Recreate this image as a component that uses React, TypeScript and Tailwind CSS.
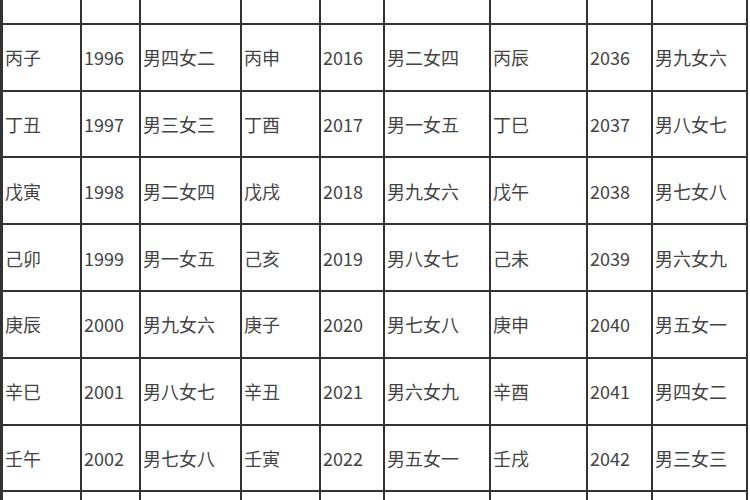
const rows: string[][] = [
  ['乙亥', '1995', '男五女一', '乙未', '2015', '男三女三', '乙卯', '2035', '男一女五'],
  ['丙子', '1996', '男四女二', '丙申', '2016', '男二女四', '丙辰', '2036', '男九女六'],
  ['丁丑', '1997', '男三女三', '丁酉', '2017', '男一女五', '丁巳', '2037', '男八女七'],
  ['戊寅', '1998', '男二女四', '戊戌', '2018', '男九女六', '戊午', '2038', '男七女八'],
  ['己卯', '1999', '男一女五', '己亥', '2019', '男八女七', '己未', '2039', '男六女九'],
  ['庚辰', '2000', '男九女六', '庚子', '2020', '男七女八', '庚申', '2040', '男五女一'],
  ['辛巳', '2001', '男八女七', '辛丑', '2021', '男六女九', '辛酉', '2041', '男四女二'],
  ['壬午', '2002', '男七女八', '壬寅', '2022', '男五女一', '壬戌', '2042', '男三女三'],
  ['癸未', '2003', '男六女九', '癸卯', '2023', '男四女二', '癸亥', '2043', '男二女四'],
]

export default function App() {
  return (
    <div className="h-[500px] w-[750px] overflow-hidden bg-white">
      <div
        className="mt-[-42px] grid w-[748px] auto-rows-[66.8px] grid-cols-[79px_59px_101px_79px_64px_106px_97px_65px_95px] border-l-[3px] border-[#333]"
        style={{ fontFamily: '"Noto Sans CJK SC", "Noto Sans", sans-serif' }}
      >
        {rows.flatMap((row, i) =>
          row.map((cell, j) => (
            <div
              key={`${i}-${j}`}
              className="flex items-center border-b-2 border-r-2 border-[#333] pl-[2px] text-[18px] leading-none text-[#444]"
            >
              {cell}
            </div>
          )),
        )}
      </div>
    </div>
  )
}
